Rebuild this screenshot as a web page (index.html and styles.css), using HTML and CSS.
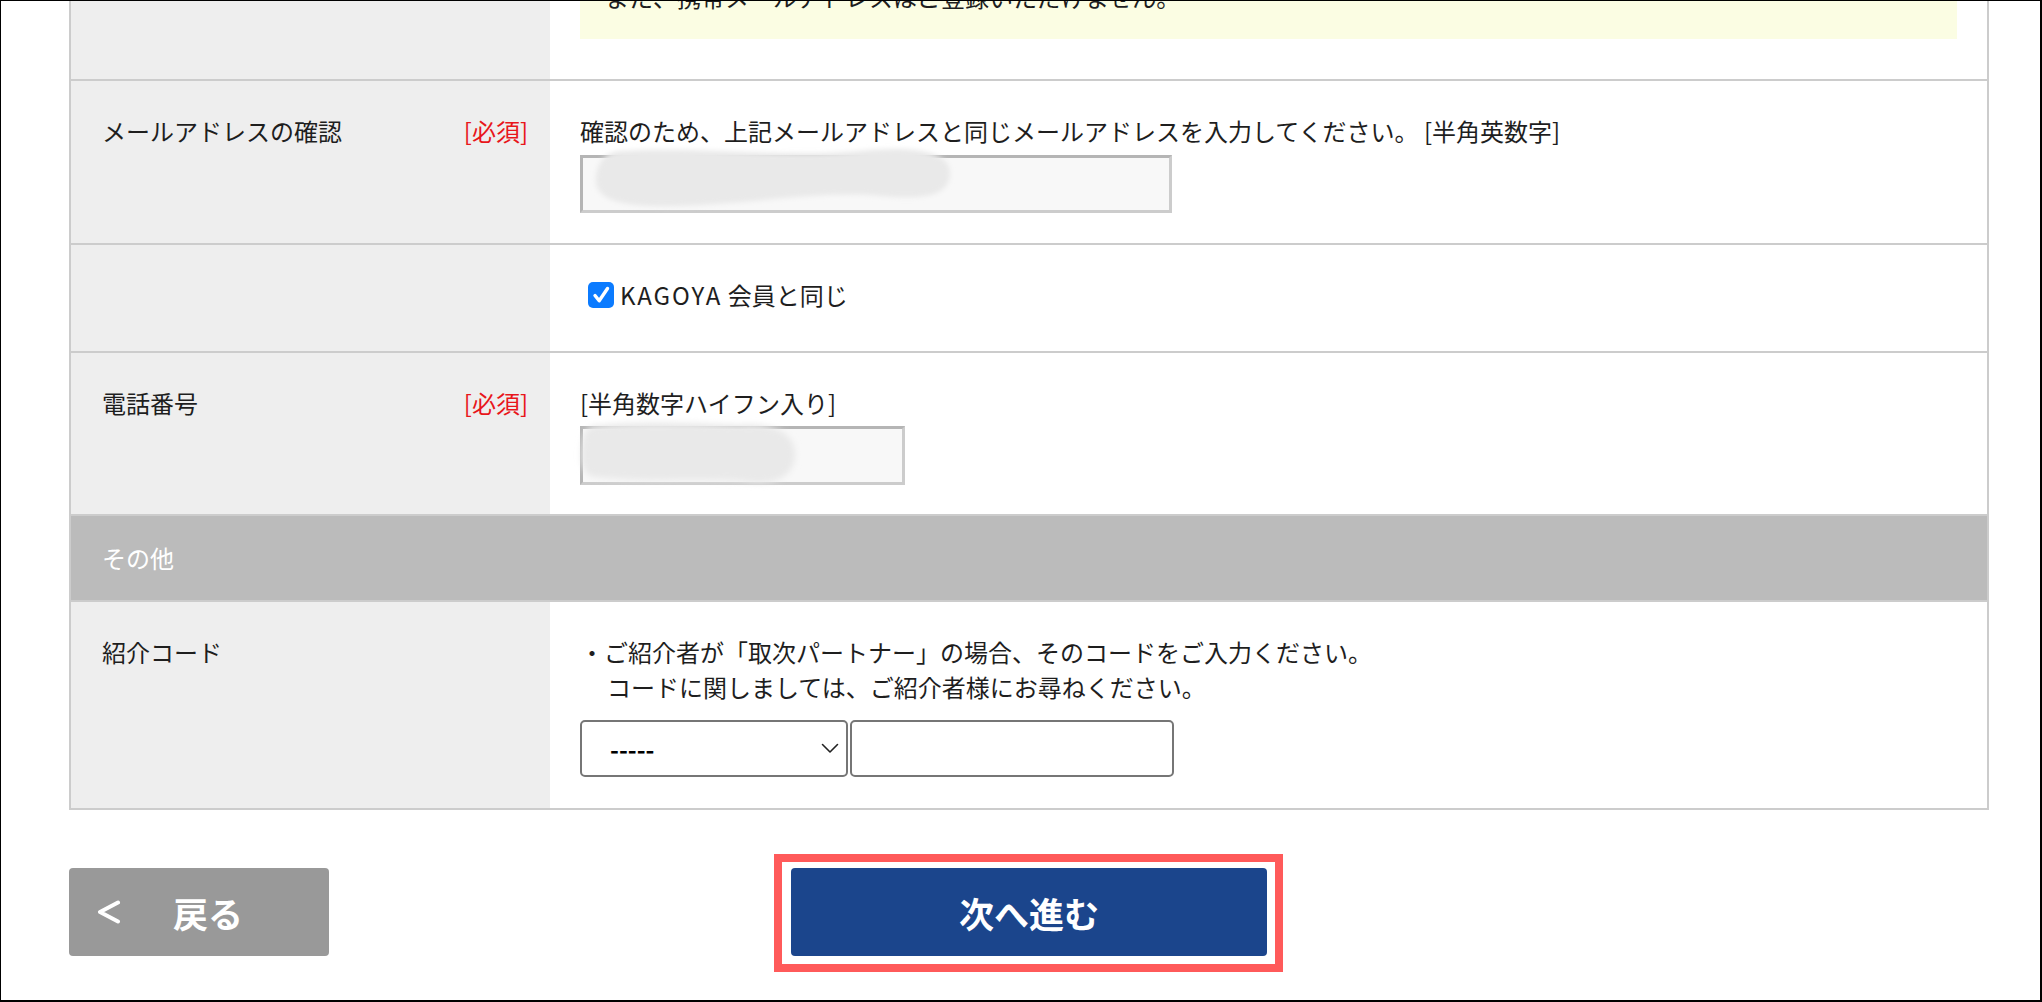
FILE: index.html
```html
<!DOCTYPE html>
<html lang="ja">
<head>
<meta charset="utf-8">
<title>お申し込みフォーム</title>
<link rel="stylesheet" href="styles.css">
</head>
<body>
<div class="frame">
  <div class="page">
    <div class="form-table">
      <div class="row">
        <div class="label"></div>
        <div class="field field-first">
          <div class="notice">また、携帯メールアドレスはご登録いただけません。</div>
        </div>
      </div>

      <div class="row">
        <div class="label"><span>メールアドレスの確認</span><span class="req">[必須]</span></div>
        <div class="field">
          <p class="hint">確認のため、上記メールアドレスと同じメールアドレスを入力してください。 [半角英数字]</p>
          <div class="masked">
            <input class="text-in email-in" type="text" aria-label="メールアドレスの確認">
            <svg class="blob blob-email" width="400" height="80" viewBox="0 0 400 80">
              <defs><filter id="b1" x="-10%" y="-30%" width="120%" height="160%"><feGaussianBlur stdDeviation="2.5"/></filter></defs>
              <path d="M40,6 C120,1 200,13 280,6 C330,1 372,5 370,30 C368,56 330,54 290,50 C220,47 150,63 70,61 C30,59 14,50 16,32 C18,14 28,7 40,6 Z" fill="#e9e9e9" filter="url(#b1)"/>
            </svg>
          </div>
        </div>
      </div>

      <div class="row">
        <div class="label"></div>
        <div class="field field-check">
          <label class="check-line">
            <svg class="checkbox" width="26" height="26" viewBox="0 0 26 26">
              <rect x="0" y="0" width="26" height="26" rx="5" fill="#0b7bff"/>
              <path d="M7 13.5 L11.2 18.8 L19.5 6.5" fill="none" stroke="#fff" stroke-width="3.4" stroke-linecap="round" stroke-linejoin="round"/>
            </svg>
            <span><span class="latin">KAGOYA</span> 会員と同じ</span>
          </label>
        </div>
      </div>

      <div class="row">
        <div class="label"><span>電話番号</span><span class="req">[必須]</span></div>
        <div class="field field-tel">
          <p class="hint">[半角数字ハイフン入り]</p>
          <div class="masked">
            <input class="text-in tel-in" type="text" aria-label="電話番号">
            <svg class="blob blob-tel" width="240" height="80" viewBox="0 0 240 80">
              <defs><filter id="b2" x="-10%" y="-30%" width="120%" height="160%"><feGaussianBlur stdDeviation="3"/></filter></defs>
              <path d="M14,9 C60,3 110,6 160,8 C200,5 217,20 215,40 C213,62 190,70 160,64 C110,61 60,66 14,60 C2,58 0,42 2,30 C3,17 6,10 14,9 Z" fill="#e9e9e9" filter="url(#b2)"/>
            </svg>
          </div>
        </div>
      </div>

      <div class="section-head">その他</div>

      <div class="row">
        <div class="label"><span>紹介コード</span></div>
        <div class="field field-ref">
          <p class="note">・ご紹介者が「取次パートナー」の場合、そのコードをご入力ください。</p>
          <p class="note note-indent">コードに関しましては、ご紹介者様にお尋ねください。</p>
          <div class="code-inputs">
            <div class="select-wrap">
              <select class="code-select" aria-label="紹介元">
                <option>-----</option>
              </select>
              <svg class="chev" width="18" height="11" viewBox="0 0 18 11">
                <path d="M1.5 1.5 L9 9 L16.5 1.5" fill="none" stroke="#222" stroke-width="1.6" stroke-linecap="round" stroke-linejoin="round"/>
              </svg>
            </div>
            <input class="code-input" type="text" aria-label="紹介コード">
          </div>
        </div>
      </div>
    </div>

    <div class="actions">
      <button class="btn-back" type="button">
        <svg class="back-chev" width="26" height="24" viewBox="0 0 26 24">
          <path d="M22 2.5 L4 12 L22 21.5" fill="none" stroke="#fff" stroke-width="4" stroke-linecap="round" stroke-linejoin="round"/>
        </svg>
        <span>戻る</span>
      </button>
      <div class="next-wrap">
        <button class="btn-next" type="button">次へ進む</button>
        <div class="annot"></div>
      </div>
    </div>
  </div>
</div>
</body>
</html>
```

FILE: styles.css
```css
* {
  box-sizing: border-box;
}

html,
body {
  margin: 0;
  padding: 0;
  background: #fff;
}

body {
  font-family: "Noto Sans CJK JP", "Noto Sans", sans-serif;
  font-size: 24px;
  color: #1e1e1e;
}

.frame {
  width: 2042px;
  height: 1002px;
  border-style: solid;
  border-color: #000;
  border-width: 1px 2px 2px 1px;
  overflow: hidden;
}

.page {
  width: 1920px;
  margin: -40px 0 0 68px;
}

.form-table {
  border: 2px solid #ccc;
  border-top: none;
}

.row {
  display: grid;
  grid-template-columns: 479px 1fr;
  border-bottom: 2px solid #ccc;
}

.row:last-child {
  border-bottom: none;
}

.label {
  background: #eee;
  padding: 32px 22px 30px 31px;
  display: flex;
  justify-content: space-between;
  align-items: flex-start;
  line-height: 36px;
}

.req {
  color: #e8161b;
}

.field {
  padding: 32px 30px 30px 30px;
  line-height: 36px;
}

.field-tel {
  padding-bottom: 29px;
}

.hint,
.note {
  margin: 0;
}

.field-first {
  padding: 0 30px 40px 30px;
}

.notice {
  background: #fbfde3;
  padding: 18px 25px 24px 25px;
}

.masked {
  position: relative;
  display: inline-block;
  vertical-align: top;
}

.text-in {
  display: block;
  height: 58px;
  margin-top: 6px;
  border: 3px solid #cccccc;
  border-top-color: #b5b5b5;
  border-left-color: #b5b5b5;
  background: #f8f8f8;
  font: inherit;
  padding: 0 10px;
}

.email-in {
  width: 592px;
}

.tel-in {
  width: 325px;
  height: 59px;
  margin-top: 5px;
}

.blob {
  position: absolute;
  overflow: visible;
  pointer-events: none;
}

.blob-email {
  left: 0;
  top: -4px;
}

.blob-tel {
  left: 0;
  top: -4px;
}

.field-check {
  padding: 27px 30px 33px 30px;
}

.check-line {
  display: flex;
  align-items: center;
  height: 46px;
  gap: 6px;
}

.latin {
  letter-spacing: 2px;
}

.checkbox {
  display: block;
  margin-left: 8px;
  flex: none;
}

.section-head {
  background: #bbb;
  color: #fff;
  padding: 24px 31px;
  line-height: 36px;
  border-bottom: 2px solid #ccc;
}

.field-ref {
  padding: 32px 30px 31px 30px;
}

.note {
  line-height: 35px;
}

.note-indent {
  padding-left: 27px;
}

.code-inputs {
  display: flex;
  gap: 2px;
  margin-top: 16px;
}

.select-wrap {
  position: relative;
}

.code-select {
  display: block;
  width: 268px;
  height: 57px;
  border: 2px solid #767676;
  border-radius: 5px;
  background: #fff;
  -webkit-appearance: none;
  appearance: none;
  font: inherit;
  font-weight: bold;
  color: #000;
  padding: 0 0 0 28px;
}

.chev {
  position: absolute;
  right: 9px;
  top: 23px;
}

.code-input {
  display: block;
  width: 324px;
  height: 57px;
  border: 2px solid #767676;
  border-radius: 5px;
  background: #fff;
  font: inherit;
  padding: 0 10px;
}

.actions {
  display: grid;
  grid-template-columns: 1fr auto 1fr;
  align-items: start;
  margin-top: 58px;
}

.btn-back,
.btn-next {
  border: none;
  margin: 0;
  height: 88px;
  border-radius: 4px;
  color: #fff;
  font-family: "Noto Sans CJK JP", sans-serif;
  font-weight: bold;
  font-size: 35px;
  cursor: pointer;
}

.btn-back {
  justify-self: start;
  width: 260px;
  background: #999;
  display: flex;
  align-items: center;
  padding: 0 0 0 27px;
}

.back-chev {
  display: block;
  margin-right: 51px;
  flex: none;
}

.next-wrap {
  position: relative;
}

.btn-next {
  display: block;
  width: 476px;
  background: #1b458c;
  text-align: center;
}

.annot {
  position: absolute;
  left: -17px;
  right: -16px;
  top: -14px;
  bottom: -16px;
  border: 8px solid #ff5a5a;
  pointer-events: none;
}
```
